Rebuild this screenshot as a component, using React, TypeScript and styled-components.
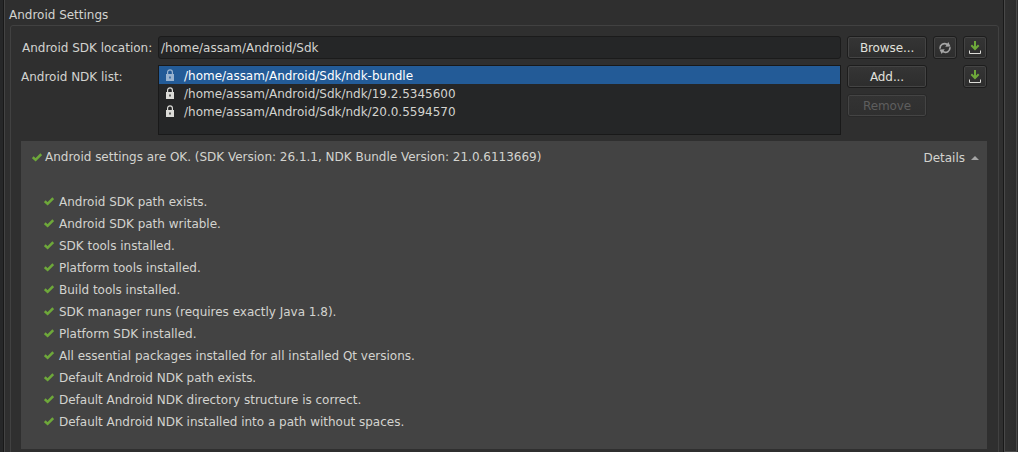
import React from "react";
import styled, { createGlobalStyle } from "styled-components";

const Global = createGlobalStyle`
  * { box-sizing: border-box; }
  body { margin: 0; background: #2f2f2f; overflow: hidden; }
`;

const Window = styled.div`
  display: flex;
  width: 1018px;
  height: 452px;
  overflow: hidden;
  background: #2f2f2f;
  color: #d3d3cf;
  font: 12px/18px "DejaVu Sans", sans-serif;
  letter-spacing: -0.01px;
  white-space: nowrap;
`;

const LeftEdge = styled.div`
  width: 5px;
  background: #262728;
  border-right: 1px solid #444444;
  box-shadow: inset -1px 0 #191919;
`;

const Page = styled.main`
  width: 998px;
  padding: 6px 4px 0 5px;
`;

const GroupTitle = styled.div`
  height: 19px;
  line-height: 18px;
  margin-left: -1px;
`;

const GroupBox = styled.section`
  height: 440px;
  border: 1px solid #414141;
  border-radius: 3px;
  padding: 10px 11px 0 10px;
`;

const Row = styled.div<{ $height: number }>`
  display: flex;
  height: ${(p) => p.$height}px;
`;

const Label = styled.label<{ $indent: number }>`
  width: 137px;
  padding-left: ${(p) => p.$indent}px;
  line-height: 25px;
`;

const PathInput = styled.div`
  width: 683px;
  height: 23px;
  padding-left: 2px;
  line-height: 23px;
  background: #252627;
  border: 1px solid #1b1b1b;
  border-radius: 3px;
`;

const NdkList = styled.div`
  width: 683px;
  height: 70px;
  background: #252627;
  border: 1px solid #191919;
`;

const NdkRow = styled.div<{ $selected?: boolean }>`
  display: flex;
  height: 18px;
  padding-left: 7px;
  gap: 10px;
  line-height: 20px;
  color: ${(p) => (p.$selected ? "#ffffff" : "#d3d3cf")};
  background: ${(p) => (p.$selected ? "#235b97" : "transparent")};
  svg {
    margin-top: 3px;
    color: ${(p) => (p.$selected ? "#9ab4d0" : "#dcdcd8")};
  }
`;

const ButtonColumn = styled.div`
  display: flex;
  flex-direction: column;
  gap: 6px;
  width: 80px;
  margin-left: 6px;
`;

const Button = styled.button<{ $width: number; $left?: number }>`
  display: flex;
  align-items: center;
  justify-content: center;
  width: ${(p) => p.$width}px;
  height: 23px;
  margin: 0 0 0 ${(p) => p.$left ?? 0}px;
  padding: 1px;
  font: inherit;
  letter-spacing: -0.1px;
  color: #e0e0dc;
  background: linear-gradient(#353535, #2d2d2d);
  border: 1px solid #1d1d1d;
  border-radius: 3px;
  box-shadow: inset 0 0 0 1px #444444;
  &:disabled {
    color: #5e5e5e;
    background: linear-gradient(#333333, #2f2f2f);
    border-color: #292929;
  }
`;

const Summary = styled.div`
  width: 966px;
  height: 308px;
  margin-top: 6px;
  background: #434343;
`;

const SummaryHead = styled.div`
  display: flex;
  height: 50px;
  padding: 7px 8px 0 11px;
`;

const SummaryText = styled.div`
  display: flex;
  gap: 3px;
  flex: 1;
  svg { margin-top: 4px; }
`;

const Details = styled.div`
  display: flex;
  gap: 6px;
  padding-top: 1px;
  svg { margin-top: 7px; }
`;

const Checks = styled.ul`
  margin: 0;
  padding: 0 0 0 23px;
  list-style: none;
`;

const Check = styled.li`
  display: flex;
  gap: 5px;
  height: 22px;
  line-height: 22px;
  svg { margin-top: 5px; }
`;

const ScrollBar = styled.div`
  display: flex;
  width: 15px;
  height: 452px;
  border-left: 1px solid #191919;
`;

const Handle = styled.div`
  width: 13px;
  height: 452px;
  background: linear-gradient(90deg, #313131, #2c2c2c);
  border: 1px solid #494949;
  border-top: 0;
`;

const Tick = () => (
  <svg width="10" height="10" viewBox="0 0 10 10">
    <path d="M.8 5.2 3.6 7.8 9.2 2.2" fill="none" stroke="#6ea83a" strokeWidth="2.5" />
  </svg>
);

const Lock = () => (
  <svg width="8" height="12" viewBox="0 0 8 12">
    <path d="M1.6 6V3.2C1.6 .1 6.4 .1 6.4 3.2V6" fill="none" stroke="currentColor" strokeWidth="1.2" />
    <path d="M0 5h8v7H0ZM3.3 7.5v2h1.4v-2Z" fill="currentColor" fillRule="evenodd" />
  </svg>
);

const Download = () => (
  <svg width="12" height="13" viewBox="0 0 12 13">
    <path d="M6 0v8M2.3 4.3 6 8l3.7-3.7" fill="none" stroke="#6ea83a" strokeWidth="2" />
    <path d="M.5 9.5v3h11v-3" fill="none" stroke="#dcdcd8" />
  </svg>
);

const Refresh = () => (
  <svg width="12" height="12" viewBox="0 0 12 12">
    <path d="M1 6.8C.8 2.6 4.6.6 8.4 2.4M11 5.2c.2 4.2-3.6 6.2-7.4 4.4" fill="none" stroke="#a5a5a5" strokeWidth="1.7" />
    <path d="M9.3 0 11.5 4.6 6.3 4.7ZM2.7 12 .5 7.4l5.2-.1Z" fill="#a5a5a5" />
  </svg>
);

const paths = [
  "/home/assam/Android/Sdk/ndk-bundle",
  "/home/assam/Android/Sdk/ndk/19.2.5345600",
  "/home/assam/Android/Sdk/ndk/20.0.5594570",
];

const checks = [
  "Android SDK path exists.",
  "Android SDK path writable.",
  "SDK tools installed.",
  "Platform tools installed.",
  "Build tools installed.",
  "SDK manager runs (requires exactly Java 1.8).",
  "Platform SDK installed.",
  "All essential packages installed for all installed Qt versions.",
  "Default Android NDK path exists.",
  "Default Android NDK directory structure is correct.",
  "Default Android NDK installed into a path without spaces.",
];

export default function App() {
  return (
    <Window>
      <Global />
      <LeftEdge />
      <Page>
        <GroupTitle>Android Settings</GroupTitle>
        <GroupBox>
          <Row $height={29}>
            <Label $indent={1}>Android SDK location:</Label>
            <PathInput>/home/assam/Android/Sdk</PathInput>
            <Button $width={80} $left={6}>Browse...</Button>
            <Button $width={24} $left={6} aria-label="Refresh"><Refresh /></Button>
            <Button $width={24} $left={6} aria-label="Download SDK"><Download /></Button>
          </Row>
          <Row $height={70}>
            <Label $indent={0}>Android NDK list:</Label>
            <NdkList>
              {paths.map((path, i) => (
                <NdkRow key={path} $selected={i === 0}><Lock />{path}</NdkRow>
              ))}
            </NdkList>
            <ButtonColumn>
              <Button $width={80}>Add...</Button>
              <Button $width={80} disabled>Remove</Button>
            </ButtonColumn>
            <Button $width={24} $left={36} aria-label="Download NDK"><Download /></Button>
          </Row>
          <Summary>
            <SummaryHead>
              <SummaryText>
                <Tick />
                Android settings are OK. (SDK Version: 26.1.1, NDK Bundle Version: 21.0.6113669)
              </SummaryText>
              <Details>
                Details
                <svg width="8" height="4" viewBox="0 0 8 4"><path d="M0 4 4 0l4 4Z" fill="#a5a5a5" /></svg>
              </Details>
            </SummaryHead>
            <Checks>
              {checks.map((text) => <Check key={text}><Tick />{text}</Check>)}
            </Checks>
          </Summary>
        </GroupBox>
      </Page>
      <ScrollBar><Handle /></ScrollBar>
    </Window>
  );
}
